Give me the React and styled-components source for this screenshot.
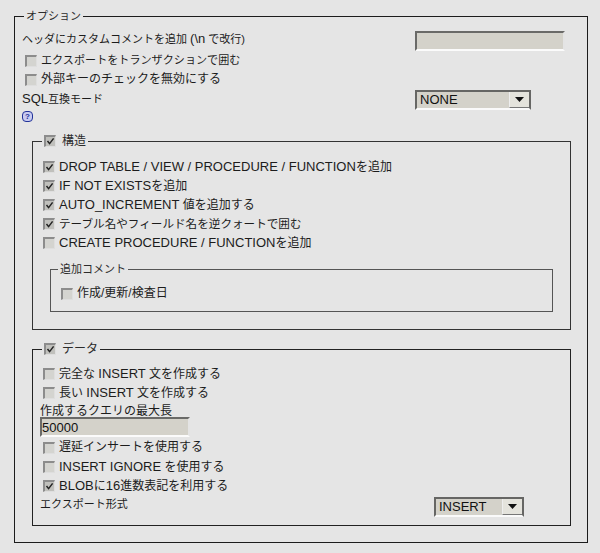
import React from "react";
import styled, { createGlobalStyle } from "styled-components";

const Global = createGlobalStyle`
  html, body { margin: 0; padding: 0; background: #e5e5e5; }
  body { font-family: "Liberation Sans", "Noto Sans CJK JP", sans-serif; font-size: 12px; color: #1c1c1c; }
`;

const Page = styled.form`
  width: 600px;
  height: 553px;
  box-sizing: border-box;
  padding: 9px 12px 0 14px;
  overflow: hidden;
`;

const Box = styled.fieldset`
  margin: ${(p) => p.$margin || 0};
  padding: ${(p) => p.$padding || 0};
  min-width: 0;
  height: ${(p) => p.$height}px;
  box-sizing: border-box;
  border: 1px solid ${(p) => p.$line || "#1c1c1c"};
`;

const Legend = styled.legend`
  display: flex;
  align-items: center;
  gap: 6px;
  height: 14px;
  margin-left: ${(p) => p.$indent}px;
  padding: 0 2px;
  line-height: 14px;
  font-size: ${(p) => p.$size || 11}px;
  color: #2c2c2c;
`;

const Row = styled.div`
  display: flex;
  align-items: ${(p) => (p.$top ? "flex-start" : "center")};
  height: ${(p) => p.$height || 19}px;
  line-height: 19px;
  margin-left: ${(p) => p.$shift || 0}px;
  white-space: nowrap;
`;

const Spread = styled(Row)`
  justify-content: space-between;
  padding-right: ${(p) => p.$right || 0}px;
`;

const Latin = styled.span`
  font-size: 13px;
`;

const Kana = styled.span`
  font-size: ${(p) => p.$size || 11}px;
`;

const Label = styled.label`
  display: flex;
  align-items: center;
  gap: 4px;
`;

const Tick = styled.span`
  flex: none;
  width: 12px;
  height: 12px;
  display: inline-flex;
  align-items: center;
  justify-content: center;
  box-sizing: border-box;
  border-style: solid;
  border-width: 2px 1px 1px 2px;
  border-color: #8c8c8c #dedede #dedede #8c8c8c;
  background: ${(p) => (p.$on ? "#c0c0bc" : "#d4d4d0")};
`;

const Field = styled.div`
  width: ${(p) => p.$width}px;
  height: 20px;
  flex: none;
  box-sizing: border-box;
  margin: ${(p) => p.$margin || 0};
  padding-top: 1px;
  line-height: 16px;
  border: 2px solid;
  border-color: #6a6a68 #e4e4e4 #fbfbfb #6a6a68;
  background: #d4d2ca;
  color: #111;
  font-size: 13px;
`;

const Dropdown = styled.div`
  width: ${(p) => p.$width}px;
  height: 20px;
  flex: none;
  display: flex;
  align-items: center;
  justify-content: space-between;
  box-sizing: border-box;
  margin-top: ${(p) => p.$top}px;
  padding-left: 3px;
  border: 2px solid;
  border-color: #666664 #666664 #fafafa #666664;
  background: #d4d2ca;
  color: #111;
  font-size: 13px;
  line-height: 16px;
`;

const Caret = styled.span`
  width: 20px;
  height: 16px;
  display: flex;
  align-items: center;
  justify-content: center;
  box-sizing: border-box;
  border-left: 1px solid #eee;
  border-bottom: 1px solid #777;
  background: #e4e3dc;
`;

const Help = styled.span`
  width: 11px;
  height: 11px;
  display: inline-flex;
  align-items: center;
  justify-content: center;
  box-sizing: border-box;
  border: 1px solid #223399;
  border-radius: 4px;
  background: #c8caf0;
  color: #223399;
  font-size: 8px;
  font-weight: bold;
  line-height: 1;
`;

const Check = ({ on }) => (
  <Tick $on={on}>
    {on && (
      <svg width="9" height="9" viewBox="0 0 9 9">
        <path d="M1.5 4 L3.6 6.6 L7.6 1.4" fill="none" stroke="#222" strokeWidth="1.5" />
      </svg>
    )}
  </Tick>
);

const Option = ({ on, shift, children }) => (
  <Row $shift={shift}>
    <Label>
      <Check on={on} />
      <span>{children}</span>
    </Label>
  </Row>
);

const Select = ({ width, top, value }) => (
  <Dropdown $width={width} $top={top}>
    {value}
    <Caret>
      <svg width="9" height="5" viewBox="0 0 9 5">
        <path d="M0 0 H9 L4.5 5 Z" fill="#111" />
      </svg>
    </Caret>
  </Dropdown>
);

export default function App() {
  return (
    <Page>
      <Global />
      <Box $height={534} $padding="6px 16px 0 7px">
        <Legend $indent={2}>オプション</Legend>
        <Spread $top $height={22} $right={6}>
          <Kana>
            ヘッダにカスタムコメントを追加 <Latin>(\n</Latin> で改行)
          </Kana>
          <Field $width={150} $margin="2px 0 0" />
        </Spread>
        <Option shift={3}>
          <Kana $size={11.1}>エクスポートをトランザクションで囲む</Kana>
        </Option>
        <Option shift={3}>外部キーのチェックを無効にする</Option>
        <Spread $top $right={40}>
          <Kana>
            <Latin>SQL</Latin>互換モード
          </Kana>
          <Select width={116} top={1} value="NONE" />
        </Spread>
        <Row $height={17}>
          <Help>?</Help>
        </Row>

        <Box $height={196} $margin="9px 0 0 10px" $padding="9px 10px 0" $line="#333">
          <Legend $indent={-1} $size={12}>
            <Check on />
            構造
          </Legend>
          <Option on>
            <Latin>DROP TABLE / VIEW / PROCEDURE / FUNCTION</Latin>を追加
          </Option>
          <Option on>
            <Latin>IF NOT EXISTS</Latin>を追加
          </Option>
          <Option on>
            <Latin>AUTO_INCREMENT</Latin> 値を追加する
          </Option>
          <Option on>
            <Kana $size={11.6}>テーブル名やフィールド名を逆クォートで囲む</Kana>
          </Option>
          <Option>
            <Latin>CREATE PROCEDURE / FUNCTION</Latin>を追加
          </Option>
          <Box $height={50} $margin="10px 7px 0 7px" $padding="8px 10px 0" $line="#555">
            <Legend $indent={-3}>追加コメント</Legend>
            <Option>作成/更新/検査日</Option>
          </Box>
        </Box>

        <Box $height={184} $margin="12px 0 0 10px" $padding="8px 10px 0" $line="#222">
          <Legend $indent={-1} $size={12}>
            <Check on />
            データ
          </Legend>
          <Option>
            完全な <Latin>INSERT</Latin> 文を作成する
          </Option>
          <Option>
            長い <Latin>INSERT</Latin> 文を作成する
          </Option>
          <Row $height={18} $shift={-3}>
            作成するクエリの最大長
          </Row>
          <Field $width={150} $margin="-3px 0 1px -3px">
            50000
          </Field>
          <Option>遅延インサートを使用する</Option>
          <Option>
            <Latin>INSERT IGNORE</Latin> を使用する
          </Option>
          <Option on>
            <Latin>BLOB</Latin>に<Latin>16</Latin>進数表記を利用する
          </Option>
          <Spread $top $shift={-3} $right={36}>
            <Kana>エクスポート形式</Kana>
            <Select width={90} top={2} value="INSERT" />
          </Spread>
        </Box>
      </Box>
    </Page>
  );
}
